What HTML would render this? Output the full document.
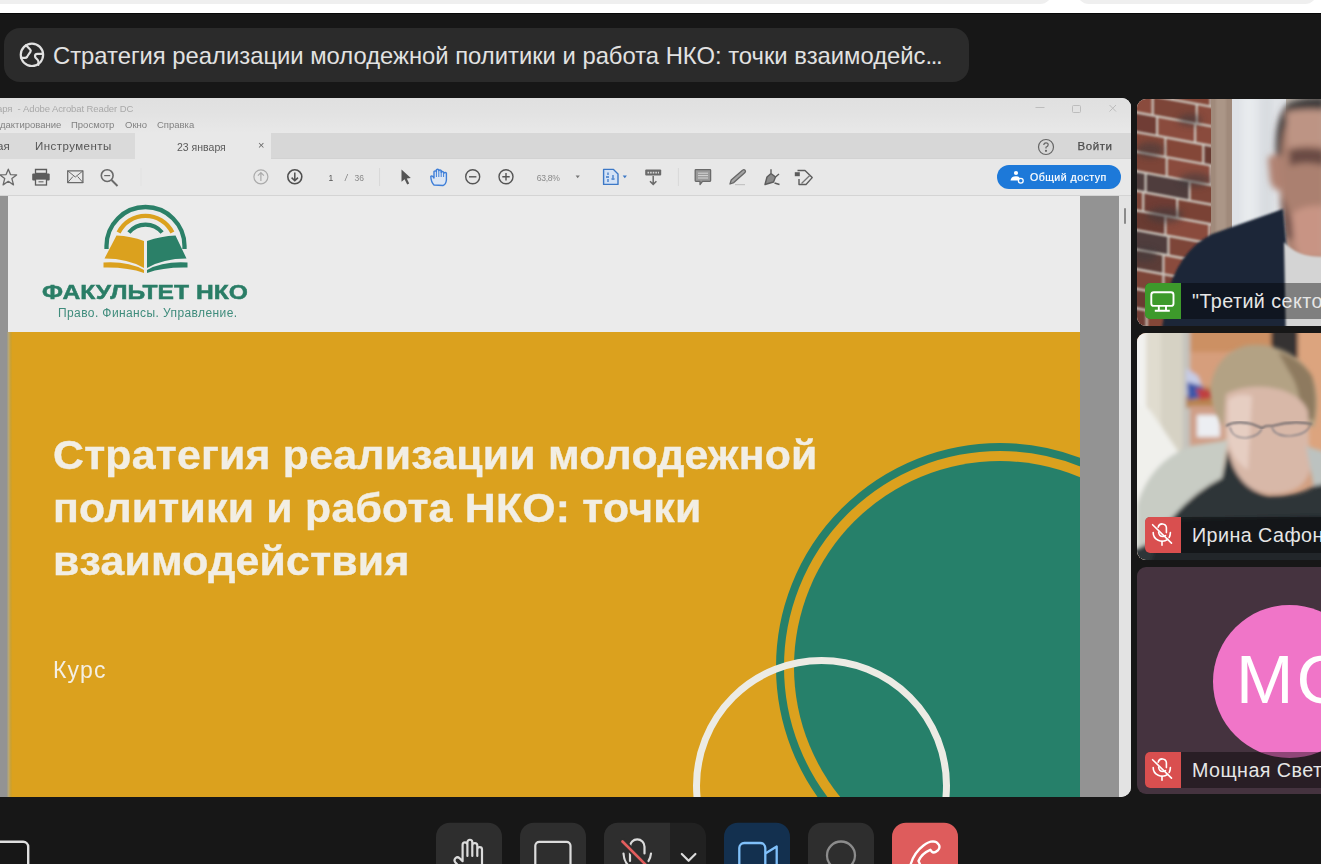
<!DOCTYPE html>
<html><head><meta charset="utf-8">
<style>
*{box-sizing:border-box;margin:0;padding:0}
html,body{width:1321px;height:864px;overflow:hidden;background:#171717;font-family:"Liberation Sans",sans-serif;position:relative}
.abs{position:absolute}
#topbar{left:0;top:0;width:1321px;height:14px;background:#fff;border-bottom:1px solid #070707}
#topbar .s{position:absolute;top:-20px;height:24px;background:#efefef;border-radius:0 0 12px 12px}
#pill{left:4px;top:28px;width:965px;height:54px;background:#2b2b2b;border-radius:16px}
#pill .t{position:absolute;left:49px;top:15px;font-size:23.8px;color:#e2e2e2;white-space:nowrap;line-height:26px}
#win{left:0;top:98px;width:1131px;height:699px;background:#e8e8e8;border-radius:0 9px 10px 0;overflow:hidden}
#chrome{position:absolute;left:0;top:0;width:1131px;height:98px;filter:blur(.3px)}
.tile{position:absolute;left:1137px;width:200px;height:227px;border-radius:9px;overflow:hidden}
.lbl{position:absolute;left:8px;height:36px;width:200px;background:rgba(0,0,0,.4);border-radius:5px 0 0 5px}
.lbl .ic{position:absolute;left:0;top:0;width:36px;height:36px;border-radius:5px 0 0 5px}
.lbl .nm{position:absolute;left:47px;top:6.5px;font-size:19.7px;color:#e6e6e6;white-space:nowrap;line-height:22px;letter-spacing:.45px}
.btn{position:absolute;top:823px;width:66px;height:60px;border-radius:14px;background:#2d2d2d}
</style></head><body>
<div id="topbar" class="abs">
  <div class="s" style="left:-20px;width:1072px"></div>
  <div class="s" style="left:1077px;width:240px"></div>
</div>

<div id="pill" class="abs">
  <svg class="abs" style="left:15px;top:14.3px" width="26" height="26" viewBox="0 0 26 26" fill="none" stroke="#e2e2e2" stroke-width="2.2" stroke-linejoin="round" stroke-linecap="round">
    <circle cx="12.95" cy="12.8" r="11.2"/>
    <path d="M7 3.2 L11.2 7.6 Q12.2 8.6 11.4 9.8 L9.2 13 Q8.4 14.2 8 15 Q7.4 15.8 6 15.8 L1.9 15.8"/>
    <path d="M24 11.9 L18.4 11.9 Q16.1 12 16 14 Q15.9 15.5 17.7 16.8 Q19.5 18.1 19.5 20.2 L19.3 22.8"/>
  </svg>
  <div class="t">Стратегия реализации молодежной политики и работа НКО: точки взаимодейс<span style="letter-spacing:-1.4px">...</span></div>
</div>

<div id="win" class="abs">
<div id="chrome">
  <div class="abs" style="left:0;top:0;width:1131px;height:35px;background:linear-gradient(#e0e0e0,#e2e2e2 40%,#e8e8e8)"></div>
  <!-- title bar -->
  <div class="abs" style="left:-3px;top:5px;font-size:9.5px;color:#a9a9a9;white-space:nowrap;letter-spacing:-0.1px">аря &nbsp;- Adobe Acrobat Reader DC</div>
  <svg class="abs" style="left:1030px;top:4px" width="95" height="14" viewBox="0 0 95 14" fill="none" stroke="#bdbdbd" stroke-width="1">
    <path d="M5.5 5.5 H14.5"/>
    <rect x="42.5" y="3.5" width="8" height="7" rx="1"/>
    <path d="M79.5 3 L86 9.5 M86 3 L79.5 9.5"/>
  </svg>
  <!-- menu -->
  <div class="abs" style="left:0px;top:20.8px;font-size:9.5px;color:#828282;white-space:nowrap">дактирование</div>
  <div class="abs" style="left:71px;top:20.8px;font-size:9.5px;color:#828282;white-space:nowrap">Просмотр</div>
  <div class="abs" style="left:125px;top:20.8px;font-size:9.5px;color:#828282;white-space:nowrap">Окно</div>
  <div class="abs" style="left:157px;top:20.8px;font-size:9.5px;color:#828282;white-space:nowrap">Справка</div>
  <!-- tab bar -->
  <div class="abs" style="left:0;top:35px;width:1131px;height:26px;background:#d7d7d7;border-bottom:1px solid #d2d2d2"></div>
  <div class="abs" style="left:0;top:35px;width:135px;height:26px;background:#dadada"></div>
  <div class="abs" style="left:135px;top:35px;width:136px;height:26px;background:#e8e8e8"></div>
  <div class="abs" style="left:-3px;top:42px;font-size:11.5px;color:#555;white-space:nowrap">ая</div>
  <div class="abs" style="left:35px;top:42px;font-size:11.5px;color:#555;white-space:nowrap;letter-spacing:.45px">Инструменты</div>
  <div class="abs" style="left:177px;top:43px;font-size:10.5px;color:#5a5a5a;white-space:nowrap">23 января</div>
  <div class="abs" style="left:258px;top:41px;font-size:11px;color:#666;white-space:nowrap">×</div>
  <svg class="abs" style="left:1037px;top:40px" width="18" height="18" viewBox="0 0 18 18" fill="none" stroke="#666" stroke-width="1.2">
    <circle cx="9" cy="9" r="7.5"/>
    <path d="M6.8 7 Q6.8 4.8 9 4.8 Q11.2 4.8 11.2 6.8 Q11.2 8.2 9 9.2 V10.6" />
    <circle cx="9" cy="12.8" r=".5" fill="#666"/>
  </svg>
  <div class="abs" style="left:1077.5px;top:42px;font-size:11.5px;color:#4e4e4e;white-space:nowrap;letter-spacing:.55px;-webkit-text-stroke:.25px #4e4e4e">Войти</div>
  <!-- toolbar -->
  <div class="abs" style="left:0;top:97px;width:1131px;height:1px;background:#d4d4d4"></div>
  <svg class="abs" style="left:0;top:61px" width="1131" height="36" viewBox="0 159 1131 36">
    <g fill="none" stroke="#6a6a6a" stroke-width="1.3" stroke-linejoin="round">
      <path d="M8.3 169.2 L10.5 174.6 L16.6 174.9 L11.9 178.6 L13.5 184.9 L8.3 181.3 L3.1 184.9 L4.7 178.6 L0 174.9 L6.1 174.6 Z"/>
      <rect x="67.7" y="170.8" width="15.2" height="11.8"/>
      <path d="M67.7 170.8 L75.3 177 L83 170.8 M67.7 182.6 L73 176.5 M83 182.6 L77.6 176.5" stroke-width="1"/>
      <circle cx="107.2" cy="175.6" r="5.9" stroke-width="1.6"/>
      <path d="M104.2 175.6 H110.2" stroke-width="1.2"/>
      <path d="M111.5 180 L117.5 186" stroke-width="1.9"/>
    </g>
    <g fill="#5c5c5c">
      <path d="M35.5 169.5 H46.5 V173.5 H35.5 Z" fill="none" stroke="#5c5c5c" stroke-width="1.3"/>
      <rect x="32.2" y="173.6" width="17.5" height="7" rx="1"/>
      <rect x="35.5" y="179" width="11" height="6" fill="#e8e8e8" stroke="#5c5c5c" stroke-width="1.3"/>
      <rect x="38.5" y="181" width="5" height="1.5" fill="#888"/>
    </g>
    <circle cx="260.9" cy="176.8" r="7" fill="none" stroke="#ababab" stroke-width="1.2"/>
    <path d="M260.9 181 V172.6 M257.9 175.6 L260.9 172.6 L263.9 175.6" fill="none" stroke="#ababab" stroke-width="1.2"/>
    <circle cx="294.8" cy="176.8" r="7" fill="none" stroke="#505050" stroke-width="1.6"/>
    <path d="M294.8 172.4 V180.8 M291.6 177.6 L294.8 180.8 L298 177.6" fill="none" stroke="#505050" stroke-width="1.5"/>
    <text x="328.5" y="180.6" font-family="Liberation Sans" font-size="8.5" fill="#555">1</text>
    <text x="345" y="180.6" font-family="Liberation Sans" font-size="8.5" fill="#777" font-style="italic">/</text>
    <text x="354.6" y="180.6" font-family="Liberation Sans" font-size="8.5" fill="#888">36</text>
    <path d="M141 168 V186" stroke="#e2e2e2" stroke-width="1"/><path d="M379.6 168 V186 M678.4 168 V186" stroke="#d8d8d8" stroke-width="1"/>
    <path d="M401.5 169.4 L401.5 181.8 L404.6 179.2 L407.2 184.6 L409.2 183.6 L406.8 178.4 L410.8 178 Z" fill="#555"/>
    <path d="M434 185 Q431 182 430.8 176.5 Q431.5 175.5 433 176.5 L434 178 V171.5 Q435.2 170.2 436.4 171.5 V169.8 Q437.6 168.6 438.8 169.8 V170.6 Q440 169.4 441.2 170.6 V172.2 Q442.4 171 443.6 172.2 L444 173 Q445.2 172 446.4 173 V180 Q446 184.6 443 185.5 Z" fill="#dce6f4" stroke="#3f7fd8" stroke-width="1.4" stroke-linejoin="round"/>
    <path d="M436.4 171.5 V177 M438.8 170 V177 M441.2 170.6 V177 M443.6 172.2 V177" stroke="#3f7fd8" stroke-width="1"/>
    <circle cx="472.7" cy="176.8" r="7" fill="none" stroke="#555" stroke-width="1.4"/>
    <path d="M469 176.8 H476.4" stroke="#555" stroke-width="1.4"/>
    <circle cx="506" cy="176.8" r="7" fill="none" stroke="#555" stroke-width="1.4"/>
    <path d="M502.3 176.8 H509.7 M506 173.1 V180.5" stroke="#555" stroke-width="1.4"/>
    <text x="536.8" y="180.6" font-family="Liberation Sans" font-size="8.6" fill="#8a8a8a" letter-spacing="-0.3">63,8%</text>
    <path d="M575.6 175.6 H579.8 L577.7 178.2 Z" fill="#777"/>
    <path d="M603.6 169.4 H613.5 L618 173.9 V184.4 H603.6 Z" fill="#d3e2f6" stroke="#3c78c6" stroke-width="1.4" stroke-linejoin="round"/>
    <path d="M608 172.5 V175 M606 177 H609 M608 179 V182 M613 175 V178 M611.5 179 H614.5" stroke="#3c78c6" stroke-width="1.3"/>
    <path d="M622.7 175.6 H626.9 L624.8 178.2 Z" fill="#3c78c6"/>
    <rect x="645.2" y="169.6" width="16" height="6" rx="1" fill="#6a6a6a"/>
    <path d="M647.5 172.6 H659" stroke="#d8d8d8" stroke-width="1.6" stroke-dasharray="1.6 1"/>
    <path d="M653.2 176 V184.4 M650 181.2 L653.2 184.4 L656.4 181.2" fill="none" stroke="#6a6a6a" stroke-width="1.5"/>
    <path d="M695.8 169.6 H710 Q710.6 169.6 710.6 170.3 V180.6 Q710.6 181.3 710 181.3 H702.5 L700 184.6 V181.3 H695.8 Q695.2 181.3 695.2 180.6 V170.3 Q695.2 169.6 695.8 169.6 Z" fill="#9a9a9a" stroke="#6a6a6a" stroke-width="1.3" stroke-linejoin="round"/>
    <path d="M698 173.2 H708 M698 175.6 H708 M698 178 H708" stroke="#d6d6d6" stroke-width="1"/>
    <path d="M730 184 L731.2 180 L742.5 170.2 Q744 169.2 745 170.2 Q746 171.4 745 172.6 L733.8 182.6 Z" fill="#a4a4a4" stroke="#666" stroke-width="1.3" stroke-linejoin="round"/>
    <path d="M735 184.6 H745" stroke="#c4c4c4" stroke-width="1.2"/>
    <path d="M771 169.2 L771 173 M765 184.5 L767 177 L771 173.5 L775.5 177 L773.5 182 Z" fill="#8a8a8a" stroke="#5c5c5c" stroke-width="1.4" stroke-linejoin="round"/>
    <path d="M775.5 177 L779 174 M774.5 183 L779.5 184.5" stroke="#5c5c5c" stroke-width="1.4"/>
    <path d="M797.5 170.5 H805 L812.2 177.6 L806 184.5 H799 V179" fill="none" stroke="#5c5c5c" stroke-width="1.4" stroke-linejoin="round"/>
    <rect x="794.8" y="172.2" width="5" height="4" fill="#5c5c5c"/>
    <path d="M801.5 183.5 L810 175.2" stroke="#777" stroke-width="1.3"/>
    <rect x="997" y="165" width="124" height="24" rx="12" fill="#1d79d9"/>
    <circle cx="1016" cy="173" r="2.1" fill="#fff"/>
    <path d="M1010.5 180.5 Q1011 176.2 1016 176.2 Q1018.5 176.2 1019.5 177.5 V180.5 Z" fill="#fff"/>
    <circle cx="1020.8" cy="180.8" r="2.4" fill="#1d79d9" stroke="#fff" stroke-width="1.3"/>
    <text x="1030" y="181" font-family="Liberation Sans" font-size="10.6" fill="#fff" letter-spacing=".45" stroke="#fff" stroke-width=".2">Общий доступ</text>
  </svg>
  </div>
  <!-- doc -->
  <div class="abs" style="left:0;top:98px;width:8px;height:601px;background:#939393"></div>
  <div class="abs" style="left:1080px;top:98px;width:39px;height:601px;background:#939393"></div>
  <div class="abs" style="left:1119px;top:98px;width:12px;height:601px;background:#e3e3e3"></div>
  <div class="abs" style="left:1124px;top:110px;width:2px;height:16px;background:#8a8a8a;border-radius:1px"></div>
  <div class="abs" style="left:6.5px;top:234px;width:5px;height:465px;background:linear-gradient(to right,#9a9888,#bba874,#c9a23c,#d3a020);z-index:2"></div>
  <div id="slide" class="abs" style="left:8px;top:98px;width:1072px;height:601px;background:#ebebeb;overflow:hidden;filter:blur(.3px)">
    <div class="abs" style="left:0;top:136px;width:1072px;height:465px;background:#dba11e"></div>
    <svg class="abs" style="left:0;top:0" width="1072" height="601" viewBox="8 196 1072 601">
      <circle cx="1000" cy="667" r="220" fill="none" stroke="#26806a" stroke-width="8"/>
      <circle cx="1000" cy="667" r="206" fill="#26806a"/>
      <circle cx="821.5" cy="785.5" r="125" fill="none" stroke="#ecebe4" stroke-width="7"/>
      <!-- logo -->
      <g fill="none" stroke-linecap="butt">
        <path d="M106.5 249 L106.5 246 A39 39 0 0 1 184.5 246 L184.5 249" stroke="#2b8068" stroke-width="4.3"/>
        <path d="M118.6 232.5 A30 30 0 0 1 172.4 232.5" stroke="#dba11e" stroke-width="4.3"/>
        <path d="M128.9 232.5 A21.4 21.4 0 0 1 162.1 232.5" stroke="#2b8068" stroke-width="4.1"/>
      </g>
      <path d="M116.5 235.5 Q131 236 144 241 V268 Q128 258.5 104.5 258.5 Z" fill="#dba11e"/>
      <path d="M175.5 235.5 Q161 236 147 241 V268 Q163 258.5 186.5 258.5 Z" fill="#2b8068"/>
      <path d="M103.5 262.5 Q128 261 144 270 V273 Q128 267 103.5 267.5 Z" fill="#dba11e"/>
      <path d="M187.5 262.5 Q163 261 147 270 V273 Q163 267 187.5 267.5 Z" fill="#2b8068"/>
    </svg>
    <div class="abs" style="left:34px;top:84px;font-size:20.5px;font-weight:bold;color:#2a7d66;white-space:nowrap;transform-origin:0 0;transform:scaleX(1.2);-webkit-text-stroke:.5px #2a7d66">ФАКУЛЬТЕТ НКО</div>
    <div class="abs" style="left:50px;top:110px;font-size:12px;color:#3f8c7c;white-space:nowrap;letter-spacing:.4px">Право. Финансы. Управление.</div>
    <div id="ttl" class="abs" style="left:45px;top:232px;font-size:41.5px;line-height:53px;font-weight:bold;color:#f2eee4;white-space:nowrap;letter-spacing:.25px;transform-origin:0 0;transform:scaleX(1.03);-webkit-text-stroke:.4px #f2eee4">Стратегия реализации молодежной<br>политики и работа НКО: точки<br>взаимодействия</div>
    <div class="abs" style="left:45px;top:461px;font-size:23px;color:#f4efe4;white-space:nowrap;letter-spacing:1.2px">Курс</div>
  </div>
</div>

<div class="tile" style="top:99px;background:#b8b0a8">
  <svg class="abs" style="left:0;top:0" width="184" height="227" viewBox="1137 99 184 227">
    <defs><filter id="bl1" x="-10%" y="-10%" width="120%" height="120%"><feGaussianBlur stdDeviation="1.2"/></filter>
    <filter id="bl2" x="-20%" y="-20%" width="140%" height="140%"><feGaussianBlur stdDeviation="3"/></filter>
    <clipPath id="bc"><rect x="1130" y="95" width="82" height="240"/></clipPath></defs>
    <rect x="1130" y="95" width="82" height="240" fill="#cbc4bc"/>
    <g clip-path="url(#bc)" filter="url(#bl1)"><g transform="translate(1137 99) skewY(10.5) translate(-1137 -99)">
<rect x="1091.3" y="35.3" width="31.8" height="17.2" fill="#693b33"/>
<rect x="1125.3" y="35.3" width="27.8" height="17.2" fill="#703d34"/>
<rect x="1155.3" y="35.3" width="27.8" height="17.2" fill="#7d4537"/>
<rect x="1185.3" y="35.3" width="27.8" height="17.2" fill="#5c3d38"/>
<rect x="1215.3" y="35.3" width="27.8" height="17.2" fill="#703d34"/>
<rect x="1088.0" y="54.9" width="27.8" height="17.2" fill="#5c3d38"/>
<rect x="1118.0" y="54.9" width="27.8" height="17.2" fill="#693b33"/>
<rect x="1148.0" y="54.9" width="27.8" height="17.2" fill="#703d34"/>
<rect x="1178.0" y="54.9" width="31.8" height="17.2" fill="#7a4236"/>
<rect x="1212.0" y="54.9" width="41.8" height="17.2" fill="#7a4236"/>
<rect x="1071.7" y="74.5" width="27.8" height="17.2" fill="#844738"/>
<rect x="1101.7" y="74.5" width="35.8" height="17.2" fill="#693b33"/>
<rect x="1139.7" y="74.5" width="31.8" height="17.2" fill="#703d34"/>
<rect x="1173.7" y="74.5" width="35.8" height="17.2" fill="#844738"/>
<rect x="1211.7" y="74.5" width="27.8" height="17.2" fill="#5c3d38"/>
<rect x="1089.8" y="94.1" width="27.8" height="17.2" fill="#7a4236"/>
<rect x="1119.8" y="94.1" width="31.8" height="17.2" fill="#8a4c3c"/>
<rect x="1153.8" y="94.1" width="41.8" height="17.2" fill="#7d4537"/>
<rect x="1197.8" y="94.1" width="41.8" height="17.2" fill="#8a4c3c"/>
<rect x="1090.2" y="113.7" width="31.8" height="17.2" fill="#844738"/>
<rect x="1124.2" y="113.7" width="31.8" height="17.2" fill="#703d34"/>
<rect x="1158.2" y="113.7" width="35.8" height="17.2" fill="#8a4c3c"/>
<rect x="1196.2" y="113.7" width="35.8" height="17.2" fill="#8a4c3c"/>
<rect x="1092.4" y="133.3" width="27.8" height="17.2" fill="#703d34"/>
<rect x="1122.4" y="133.3" width="41.8" height="17.2" fill="#844738"/>
<rect x="1166.4" y="133.3" width="35.8" height="17.2" fill="#844738"/>
<rect x="1204.4" y="133.3" width="41.8" height="17.2" fill="#693b33"/>
<rect x="1099.8" y="152.9" width="27.8" height="17.2" fill="#7d4537"/>
<rect x="1129.8" y="152.9" width="35.8" height="17.2" fill="#7d4537"/>
<rect x="1167.8" y="152.9" width="41.8" height="17.2" fill="#8a4c3c"/>
<rect x="1211.8" y="152.9" width="27.8" height="17.2" fill="#703d34"/>
<rect x="1072.7" y="172.5" width="41.8" height="17.2" fill="#703d34"/>
<rect x="1116.7" y="172.5" width="27.8" height="17.2" fill="#4f3e3c"/>
<rect x="1146.7" y="172.5" width="41.8" height="17.2" fill="#4f3e3c"/>
<rect x="1190.7" y="172.5" width="41.8" height="17.2" fill="#7d4537"/>
<rect x="1100.3" y="192.1" width="41.8" height="17.2" fill="#7d4537"/>
<rect x="1144.3" y="192.1" width="31.8" height="17.2" fill="#703d34"/>
<rect x="1178.3" y="192.1" width="41.8" height="17.2" fill="#7a4236"/>
<rect x="1094.5" y="211.7" width="35.8" height="17.2" fill="#844738"/>
<rect x="1132.5" y="211.7" width="31.8" height="17.2" fill="#693b33"/>
<rect x="1166.5" y="211.7" width="41.8" height="17.2" fill="#8a4c3c"/>
<rect x="1210.5" y="211.7" width="27.8" height="17.2" fill="#844738"/>
<rect x="1087.5" y="231.3" width="35.8" height="17.2" fill="#844738"/>
<rect x="1125.5" y="231.3" width="41.8" height="17.2" fill="#4f3e3c"/>
<rect x="1169.5" y="231.3" width="41.8" height="17.2" fill="#7d4537"/>
<rect x="1213.5" y="231.3" width="41.8" height="17.2" fill="#5c3d38"/>
<rect x="1096.5" y="250.9" width="31.8" height="17.2" fill="#844738"/>
<rect x="1130.5" y="250.9" width="31.8" height="17.2" fill="#5c3d38"/>
<rect x="1164.5" y="250.9" width="27.8" height="17.2" fill="#8a4c3c"/>
<rect x="1194.5" y="250.9" width="31.8" height="17.2" fill="#4f3e3c"/>
<rect x="1092.5" y="270.5" width="31.8" height="17.2" fill="#693b33"/>
<rect x="1126.5" y="270.5" width="35.8" height="17.2" fill="#7d4537"/>
<rect x="1164.5" y="270.5" width="31.8" height="17.2" fill="#7a4236"/>
<rect x="1198.5" y="270.5" width="41.8" height="17.2" fill="#693b33"/>
<rect x="1089.1" y="290.1" width="41.8" height="17.2" fill="#703d34"/>
<rect x="1133.1" y="290.1" width="41.8" height="17.2" fill="#693b33"/>
<rect x="1177.1" y="290.1" width="27.8" height="17.2" fill="#5c3d38"/>
<rect x="1207.1" y="290.1" width="27.8" height="17.2" fill="#5c3d38"/>
<rect x="1087.8" y="309.7" width="27.8" height="17.2" fill="#7d4537"/>
<rect x="1117.8" y="309.7" width="27.8" height="17.2" fill="#703d34"/>
<rect x="1147.8" y="309.7" width="27.8" height="17.2" fill="#844738"/>
<rect x="1177.8" y="309.7" width="27.8" height="17.2" fill="#7d4537"/>
<rect x="1207.8" y="309.7" width="27.8" height="17.2" fill="#703d34"/>
<rect x="1074.8" y="329.3" width="41.8" height="17.2" fill="#844738"/>
<rect x="1118.8" y="329.3" width="35.8" height="17.2" fill="#7d4537"/>
<rect x="1156.8" y="329.3" width="35.8" height="17.2" fill="#8a4c3c"/>
<rect x="1194.8" y="329.3" width="27.8" height="17.2" fill="#703d34"/>
<rect x="1075.5" y="348.9" width="41.8" height="17.2" fill="#8a4c3c"/>
<rect x="1119.5" y="348.9" width="41.8" height="17.2" fill="#4f3e3c"/>
<rect x="1163.5" y="348.9" width="27.8" height="17.2" fill="#844738"/>
<rect x="1193.5" y="348.9" width="27.8" height="17.2" fill="#7d4537"/>
    </g></g>
    <g clip-path="url(#bc)" filter="url(#bl2)" opacity=".55">
      <ellipse cx="1150" cy="150" rx="14" ry="8" fill="#3e3a3c"/>
      <ellipse cx="1195" cy="180" rx="16" ry="7" fill="#3e3a3c"/>
      <ellipse cx="1165" cy="215" rx="18" ry="8" fill="#3e3a3c"/>
      <ellipse cx="1145" cy="255" rx="12" ry="7" fill="#3e3a3c"/>
      <ellipse cx="1190" cy="120" rx="12" ry="6" fill="#3e3a3c"/>
    </g>
    <rect x="1211" y="95" width="22" height="240" fill="#a08a7b"/>
    <rect x="1216" y="95" width="10" height="240" fill="#ab9687" filter="url(#bl1)"/>
    <rect x="1232" y="95" width="54" height="240" fill="#dfe2e6"/>
    <rect x="1242" y="95" width="14" height="240" fill="#e8ebee" filter="url(#bl2)"/>
    <rect x="1262" y="95" width="10" height="240" fill="#d8dce0" filter="url(#bl2)"/>
    <g filter="url(#bl2)">
      <path d="M1276 156 Q1274 120 1286 106 Q1298 98 1325 98 V262 L1290 262 Q1284 240 1282 215 Q1280 200 1280 190 Z" fill="#ab8070"/>
      <path d="M1276 156 Q1274 118 1288 104 Q1300 97 1325 97 V110 Q1300 108 1290 118 Q1282 128 1281 156 Z" fill="#3e3a3a"/>
      <path d="M1286 112 Q1300 108 1325 110 V146 Q1305 142 1288 148 Z" fill="#bd9484"/>
      <path d="M1289 150 Q1305 146 1325 150 V166 Q1305 160 1290 166 Z" fill="#6a4c44"/>
      <path d="M1268 158 Q1272 153 1280 156 L1283 190 Q1272 192 1270 180 Z" fill="#b08272"/>
      <path d="M1282 196 Q1292 220 1298 238 L1286 240 Q1282 220 1281 200 Z" fill="#705048"/>
      <path d="M1292 214 Q1302 204 1325 206 V258 L1300 258 Q1292 245 1292 214 Z" fill="#c89484"/>
    </g>
    <path d="M1160 340 L1168 292 Q1180 250 1212 234 L1283 209 L1288 262 L1288 340 Z" fill="#1d2739" filter="url(#bl1)"/>
    <path d="M1284 242 Q1300 260 1330 256 V340 H1286 Z" fill="#d4d4d4" filter="url(#bl1)"/>
  </svg>
  <div class="lbl" style="top:184px"><div class="ic" style="background:#3d9a2b"></div>
    <svg class="abs" style="left:0;top:0" width="36" height="36" viewBox="1145 283 36 36" fill="none" stroke="#fff" stroke-width="1.9" stroke-linejoin="round">
      <rect x="1151.3" y="292.3" width="22.2" height="13.6" rx="2.5"/>
      <path d="M1158.8 306 V310.5 M1166 306 V310.5 M1154.8 310.8 H1169.8"/>
    </svg>
    <div class="nm">"Третий сектор"</div></div>
</div>
<div class="tile" style="top:333px;background:#c8906e">
  <svg class="abs" style="left:0;top:0" width="184" height="227" viewBox="1137 333 184 227">
    <defs><filter id="bl3" x="-20%" y="-20%" width="140%" height="140%"><feGaussianBlur stdDeviation="2.2"/></filter>
    <filter id="bl4" x="-10%" y="-10%" width="120%" height="120%"><feGaussianBlur stdDeviation=".8"/></filter></defs>
    <rect x="1130" y="325" width="200" height="240" fill="#d2a082"/>
    <g filter="url(#bl3)">
      <rect x="1130" y="325" width="17" height="240" fill="#f2f2f0"/>
      <rect x="1146" y="325" width="16" height="240" fill="#e0dccf"/>
      <rect x="1161" y="325" width="22" height="240" fill="#d6d2c4"/>
      <rect x="1183" y="325" width="7" height="240" fill="#c4c2bc"/>
      <rect x="1190" y="325" width="82" height="28" fill="#cc9064"/>
      <rect x="1190" y="352" width="82" height="38" fill="#d69e7c"/>
      <rect x="1271" y="325" width="28" height="34" fill="#343032"/>
      <rect x="1298" y="325" width="30" height="140" fill="#dca47e"/>
      <path d="M1186 392 Q1200 385 1215 388 L1215 406 L1186 408 Z" fill="#b88450"/>
      <rect x="1190" y="406" width="35" height="45" fill="#cf9e86"/>
      <path d="M1186 368 L1198 376 L1204 392 L1186 396 Z" fill="#c6cce6"/>
      <path d="M1187 382 L1202 386 L1210 396 L1188 400 Z" fill="#3c56a8"/>
      <path d="M1196 388 L1212 390 L1214 398 L1200 400 Z" fill="#c04040"/>
      <rect x="1197" y="415" width="23" height="22" fill="#eceef2"/>
    </g>
    <g filter="url(#bl3)">
      <path d="M1210 390 Q1214 356 1244 346 Q1264 342 1282 350 Q1306 360 1314 382 Q1320 402 1314 428 L1300 420 L1226 430 Q1212 412 1210 390 Z" fill="#b3a284"/>
      <path d="M1278 352 Q1300 358 1312 376 Q1318 398 1314 420 L1300 418 Q1302 390 1288 370 Z" fill="#8e7a5e"/>
      <path d="M1226 394 Q1250 382 1282 390 Q1304 398 1308 412 L1310 470 Q1304 494 1270 494 Q1234 490 1228 458 Q1222 436 1226 394 Z" fill="#d8b8a8"/>
      <path d="M1228 400 Q1238 392 1252 396 L1248 470 Q1232 460 1228 440 Z" fill="#e6cec2"/>
      <path d="M1130 400 L1150 410 L1178 451 L1138 538 L1130 545 Z" fill="#f0f0ec"/>
      <path d="M1137 548 L1137 505 Q1150 462 1190 446 L1228 440 L1222 478 Q1185 496 1155 540 Z" fill="#c8ccc4"/>
      <path d="M1306 446 L1325 452 V490 L1314 488 Z" fill="#bcc2c0"/>
      <path d="M1130 565 V552 L1155 540 Q1185 496 1222 478 L1228 450 Q1236 488 1268 496 Q1300 496 1314 486 L1325 484 V565 Z" fill="#2f3539"/>
      <path d="M1150 565 L1165 520 L1330 515 V570 Z" fill="#22272b"/>
      
    </g>
    <path d="M1226 426 Q1236 420 1252 424 L1262 428 Q1266 425 1272 426 Q1292 420 1312 424" fill="none" stroke="#5e5c62" stroke-width="1.6" filter="url(#bl4)"/>
    <path d="M1230 427 Q1232 438 1246 438 Q1260 436 1262 428 M1272 427 Q1274 436 1290 436 Q1308 434 1310 425" fill="none" stroke="#7a7880" stroke-width="1.2" filter="url(#bl4)"/>
  </svg>
  <div class="lbl" style="top:184px"><div class="ic" style="background:#d94f4f"></div>
    <svg class="abs mic" style="left:0;top:0" width="36" height="36" viewBox="1145 752 36 36"><g fill="none" stroke="#fff" stroke-width="1.6" stroke-linecap="round">
    <path d="M1158.2 762.2 A4.15 4.15 0 0 1 1166.4 762.8 V767.6"/>
    <path d="M1158.6 767 Q1159 771.5 1163 771.5 Q1164.5 771.5 1165.5 770.7"/>
    <path d="M1153.2 767.6 A9 8.3 0 0 0 1167.8 774.3 M1170.4 767.6 Q1170.2 770.5 1169.2 772.5"/>
    <path d="M1162 776.3 V780.3"/>
    <path d="M1152.6 759.7 L1171.5 778.1"/>
  </g></svg>
    <div class="nm">Ирина Сафонова</div></div>
</div>
<div class="tile" style="top:567px;background:#45333f">
  <div class="abs" style="left:75.5px;top:37.5px;width:153px;height:153px;border-radius:50%;background:#f075c8"></div>
  <div class="abs" style="left:99px;top:73px;font-size:69px;line-height:80px;color:#fff;white-space:nowrap;letter-spacing:3px">МС</div>
  <div class="lbl" style="top:185px;background:rgba(0,0,0,.4)"><div class="ic" style="background:#d94f4f"></div>
    <svg class="abs" style="left:0;top:0" width="36" height="36" viewBox="1145 752 36 36"><g fill="none" stroke="#fff" stroke-width="1.6" stroke-linecap="round">
    <path d="M1158.2 762.2 A4.15 4.15 0 0 1 1166.4 762.8 V767.6"/>
    <path d="M1158.6 767 Q1159 771.5 1163 771.5 Q1164.5 771.5 1165.5 770.7"/>
    <path d="M1153.2 767.6 A9 8.3 0 0 0 1167.8 774.3 M1170.4 767.6 Q1170.2 770.5 1169.2 772.5"/>
    <path d="M1162 776.3 V780.3"/>
    <path d="M1152.6 759.7 L1171.5 778.1"/>
  </g></svg>
    <div class="nm">Мощная Светлана</div></div>
</div>

<svg class="abs" style="left:0;top:800px" width="1321" height="64" viewBox="0 800 1321 64">
  <rect x="-10" y="841.8" width="38.2" height="40" rx="5" fill="none" stroke="#e0e0e0" stroke-width="2.4"/>
  <rect x="436" y="822.7" width="66" height="70" rx="14" fill="#2e2e2e"/>
  <rect x="520" y="822.7" width="66" height="70" rx="14" fill="#2e2e2e"/>
  <rect x="604" y="822.7" width="102" height="70" rx="14" fill="#212121"/>
  <path d="M618 822.7 H670 V892.7 H604 V836.7 A14 14 0 0 1 618 822.7 Z" fill="#2e2e2e"/>
  <rect x="724" y="822.7" width="66" height="70" rx="14" fill="#13304f"/>
  <rect x="808" y="822.7" width="66" height="70" rx="14" fill="#2e2e2e"/>
  <rect x="892" y="822.7" width="66" height="70" rx="14" fill="#de5c5c"/>
  <g fill="none" stroke="#dcdcdc" stroke-width="2.2" stroke-linecap="round" stroke-linejoin="round">
    <path d="M459 866.5 L455.2 862.2 Q453.6 859.8 455.6 858 Q457.6 856.4 459.6 858.2 L462.6 861.2 V844.8 A2.4 2.4 0 0 1 467.4 844.8 V856 M467.4 844.8 V842.2 A2.45 2.45 0 0 1 472.3 842.2 V856 M472.3 845.6 A2.5 2.5 0 0 1 477.3 845.6 V856 M477.3 849.4 A2.35 2.35 0 0 1 482 849.4 V866"/>
    <rect x="535.3" y="841.8" width="35.2" height="30" rx="4"/>
    <path d="M630 861 V846.7 A7.25 7.25 0 0 1 644.5 846.7 V853.5" />
    <path d="M623.5 853.5 Q624 862 629 866 M651 853.5 Q650.5 858 648.5 861"/>
    <path d="M681.8 854 L688.6 860.8 L695.4 854"/>
  </g>
  <path d="M622.5 841.5 L647 866" stroke="#2e2e2e" stroke-width="6.5" stroke-linecap="round"/><path d="M622.5 841.5 L647 866" stroke="#e25d5d" stroke-width="2.6" stroke-linecap="round"/>
  <g fill="none" stroke="#80c0fa" stroke-width="2.3" stroke-linejoin="round">
    <rect x="739.3" y="843" width="26" height="26" rx="5"/>
    <path d="M765.3 853.5 L776.7 846.5 V866"/>
  </g>
  <circle cx="841" cy="855.5" r="14" fill="none" stroke="#8c8c8c" stroke-width="2.3"/>
  <path d="M910.2 866 Q913.5 853 923.5 845.5 Q928.5 841.6 933 841.4 Q937 841.5 939 845 Q940.3 848 938 850.2 L935.2 852.2 Q933.2 853 931.5 851.3 L930.3 849.8 Q921.5 853.5 918.5 861 L920.8 866" fill="none" stroke="#fff" stroke-width="2.4" stroke-linejoin="round"/>
</svg>
</body></html>
